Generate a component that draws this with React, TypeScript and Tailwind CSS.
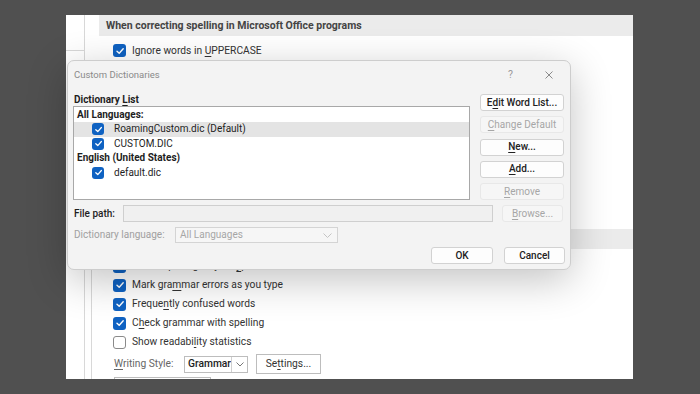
import React from "react";

const FONT = { fontFamily: 'Roboto, "Noto Sans", sans-serif' };

function Check({ on = true, size = 13 }: { on?: boolean; size?: number }) {
  if (!on) {
    return (
      <span
        className="inline-block shrink-0 rounded-[3px] border border-[#8a8a8a] bg-white"
        style={{ width: size, height: size }}
      />
    );
  }
  return (
    <span
      className="inline-flex shrink-0 items-center justify-center rounded-[3px] bg-[#0f62c2]"
      style={{ width: size, height: size }}
    >
      <svg width={size - 3} height={size - 3} viewBox="0 0 10 10">
        <path d="M2 5.2 L4.2 7.3 L8.2 2.8" fill="none" stroke="#fff" strokeWidth="1.4" strokeLinecap="round" strokeLinejoin="round" />
      </svg>
    </span>
  );
}

function U({ children }: { children: React.ReactNode }) {
  return <span className="underline underline-offset-2">{children}</span>;
}

function PageRow({ on = true, children }: { on?: boolean; children: React.ReactNode }) {
  return (
    <div className="flex h-[19px] items-center gap-[6px] pl-[14px] text-[10.25px] text-[#333]">
      <Check on={on} />
      <span>{children}</span>
    </div>
  );
}

function Btn({ children, disabled = false, w = "w-[84px]" }: { children: React.ReactNode; disabled?: boolean; w?: string }) {
  return (
    <div
      className={`${w} flex h-[17px] shrink-0 items-center justify-center rounded-[3px] border text-[10px] ${
        disabled ? "border-[#e8e8e8] bg-[#f6f6f6] text-[#a6a6a6]" : "border-[#d2d2d2] bg-[#fdfdfd] font-medium text-[#222]"
      }`}
    >
      {children}
    </div>
  );
}

function ListRow({ children, sel = false }: { children: React.ReactNode; sel?: boolean }) {
  return (
    <div className={`flex h-[14.5px] items-center gap-[10px] pl-[18px] text-[10px] text-[#1e1e1e] ${sel ? "bg-[#e4e4e4]" : ""}`}>
      <Check size={12} />
      <span>{children}</span>
    </div>
  );
}

function Dialog() {
  return (
    <div className="absolute left-[67px] top-[60px] h-[210px] w-[504px] rounded-[7px] border border-[#cdcdcd] bg-[#f3f3f3] px-[5px] shadow-[0_10px_40px_rgba(0,0,0,0.24)]">
      <div className="flex h-[33px] items-start pt-[7px]">
        <span className="flex-1 pl-[1px] text-[9.5px] text-[#8a8a8a]">Custom Dictionaries</span>
        <span className="mr-[32px] text-[10.5px] text-[#9a9a9a]">?</span>
        <svg width="8" height="8" viewBox="0 0 8 8" className="mr-[12px] mt-[3px]">
          <path d="M0.5 0.5 L7.5 7.5 M7.5 0.5 L0.5 7.5" stroke="#8a8a8a" strokeWidth="1" />
        </svg>
      </div>
      <div className="flex gap-[10px]">
        <div className="w-[397px]">
          <div className="flex h-[12px] items-center pl-[1px] text-[10px] font-bold leading-[12px] text-[#1e1e1e]">
            Dictionary&nbsp;<U>L</U>ist
          </div>
          <div className="h-[94px] border border-[#a8a8a8] bg-white pt-[0.5px]">
            <div className="flex h-[14.5px] items-center pl-[3px] text-[10px] font-bold text-[#1e1e1e]">All Languages:</div>
            <ListRow sel>RoamingCustom.dic (Default)</ListRow>
            <ListRow>CUSTOM.DIC</ListRow>
            <div className="flex h-[14.5px] items-center pl-[3px] text-[10px] font-bold text-[#1e1e1e]">English (United States)</div>
            <ListRow>default.dic</ListRow>
          </div>
        </div>
        <div className="flex w-[84px] flex-col gap-[5.3px]">
          <Btn>
            E<U>d</U>it Word List...
          </Btn>
          <Btn disabled>
            <U>C</U>hange Default
          </Btn>
          <Btn>
            <U>N</U>ew...
          </Btn>
          <Btn>
            <U>A</U>dd...
          </Btn>
          <Btn disabled>
            <U>R</U>emove
          </Btn>
        </div>
      </div>
      <div className="mt-[5px] flex h-[17px] items-center">
        <span className="w-[50px] pl-[1px] text-[10px] font-medium text-[#1e1e1e]">File path:</span>
        <div className="h-[17px] w-[370px] border border-[#cfcfcf] bg-[#f0f0f0]" />
        <div className="ml-[9px]">
          <Btn disabled w="w-[61px]">
            <U>B</U>rowse...
          </Btn>
        </div>
      </div>
      <div className="mt-[5px] flex h-[16px] items-center">
        <span className="w-[102px] pl-[1px] text-[10px] text-[#a0a0a0]">Dictionary language:</span>
        <div className="flex h-[16px] w-[163px] items-center border border-[#d4d4d4] bg-[#f6f6f6] pl-[4px] text-[10px] text-[#a6a6a6]">
          <span className="flex-1">All Languages</span>
          <svg width="9" height="5" viewBox="0 0 9 5" className="mr-[5px]">
            <path d="M0.5 0.5 L4.5 4.5 L8.5 0.5" fill="none" stroke="#c4c4c4" strokeWidth="1" />
          </svg>
        </div>
      </div>
      <div className="mt-[4px] flex justify-end gap-[11px]">
        <Btn w="w-[62px]">OK</Btn>
        <Btn w="w-[61px]">Cancel</Btn>
      </div>
    </div>
  );
}

export default function App() {
  return (
    <div className="relative h-[394px] w-[700px] overflow-hidden whitespace-nowrap bg-[#505050] pl-[66px] pt-[15px] leading-[14px]" style={FONT}>
      <div className="flex h-[364px] w-[567px] overflow-hidden bg-white">
        <div className="w-[19px] shrink-0 border-r border-[#d8d8d8]">
          <div className="h-[36px] border-b border-[#d8d8d8]" />
        </div>
        <div className="flex w-[7px] shrink-0 flex-col">
          <div className="h-[240px] shrink-0" />
          <div className="flex-1 border-r border-[#d8d8d8]" />
        </div>
        <div className="min-w-0 flex-1 pl-[7px]">
          <div className="flex h-[21px] items-center bg-[#ebebeb] pl-[7px] text-[10.5px] font-bold text-[#444]">
            When correcting spelling in Microsoft Office programs
          </div>
          <div className="mt-[5px]">
            <PageRow>
              Ignore words in <U>U</U>PPERCASE
            </PageRow>
            <PageRow>Ignore words that contain numbers</PageRow>
            <PageRow>Ignore Internet and file addresses</PageRow>
            <PageRow>Flag repeated words</PageRow>
            <PageRow on={false}>Enforce accented uppercase in French</PageRow>
            <PageRow on={false}>Suggest from main dictionary only</PageRow>
          </div>
          <div className="mt-[74px] flex h-[20px] items-center bg-[#ebebeb] pl-[7px] text-[10.5px] font-bold text-[#444]">
            When correcting grammar in Word
          </div>
          <div className="mt-[7.5px]">
            <PageRow>
              Check spelling as you t<U>y</U>pe
            </PageRow>
            <PageRow>
              Mark gra<U>m</U>mar errors as you type
            </PageRow>
            <PageRow>
              Freque<U>n</U>tly confused words
            </PageRow>
            <PageRow>
              C<U>h</U>eck grammar with spelling
            </PageRow>
            <PageRow on={false}>
              Show readabi<U>l</U>ity statistics
            </PageRow>
          </div>
          <div className="mt-[2.5px] flex h-[20px] items-center pl-[15px] text-[10.25px]">
            <span className="w-[70px] text-[#666]">
              <U>W</U>riting Style:
            </span>
            <div className="flex h-[17px] w-[64px] items-center border border-[#bdbdbd] bg-white">
              <span className="flex-1 pl-[3px] font-medium text-[#222]">Grammar</span>
              <div className="flex h-full w-[16px] items-center justify-center border-l border-[#d0d0d0]">
                <svg width="8" height="5" viewBox="0 0 8 5">
                  <path d="M0.5 0.5 L4 4 L7.5 0.5" fill="none" stroke="#777" strokeWidth="1" />
                </svg>
              </div>
            </div>
            <div className="ml-[8px] flex h-[20px] w-[65px] items-center justify-center border border-[#bdbdbd] bg-white text-[#333]">
              Se<U>t</U>tings...
            </div>
          </div>
          <div className="ml-[15px] mt-[3px] h-[10px] w-[97px] border border-[#bdbdbd]" />
        </div>
      </div>
      <Dialog />
    </div>
  );
}
